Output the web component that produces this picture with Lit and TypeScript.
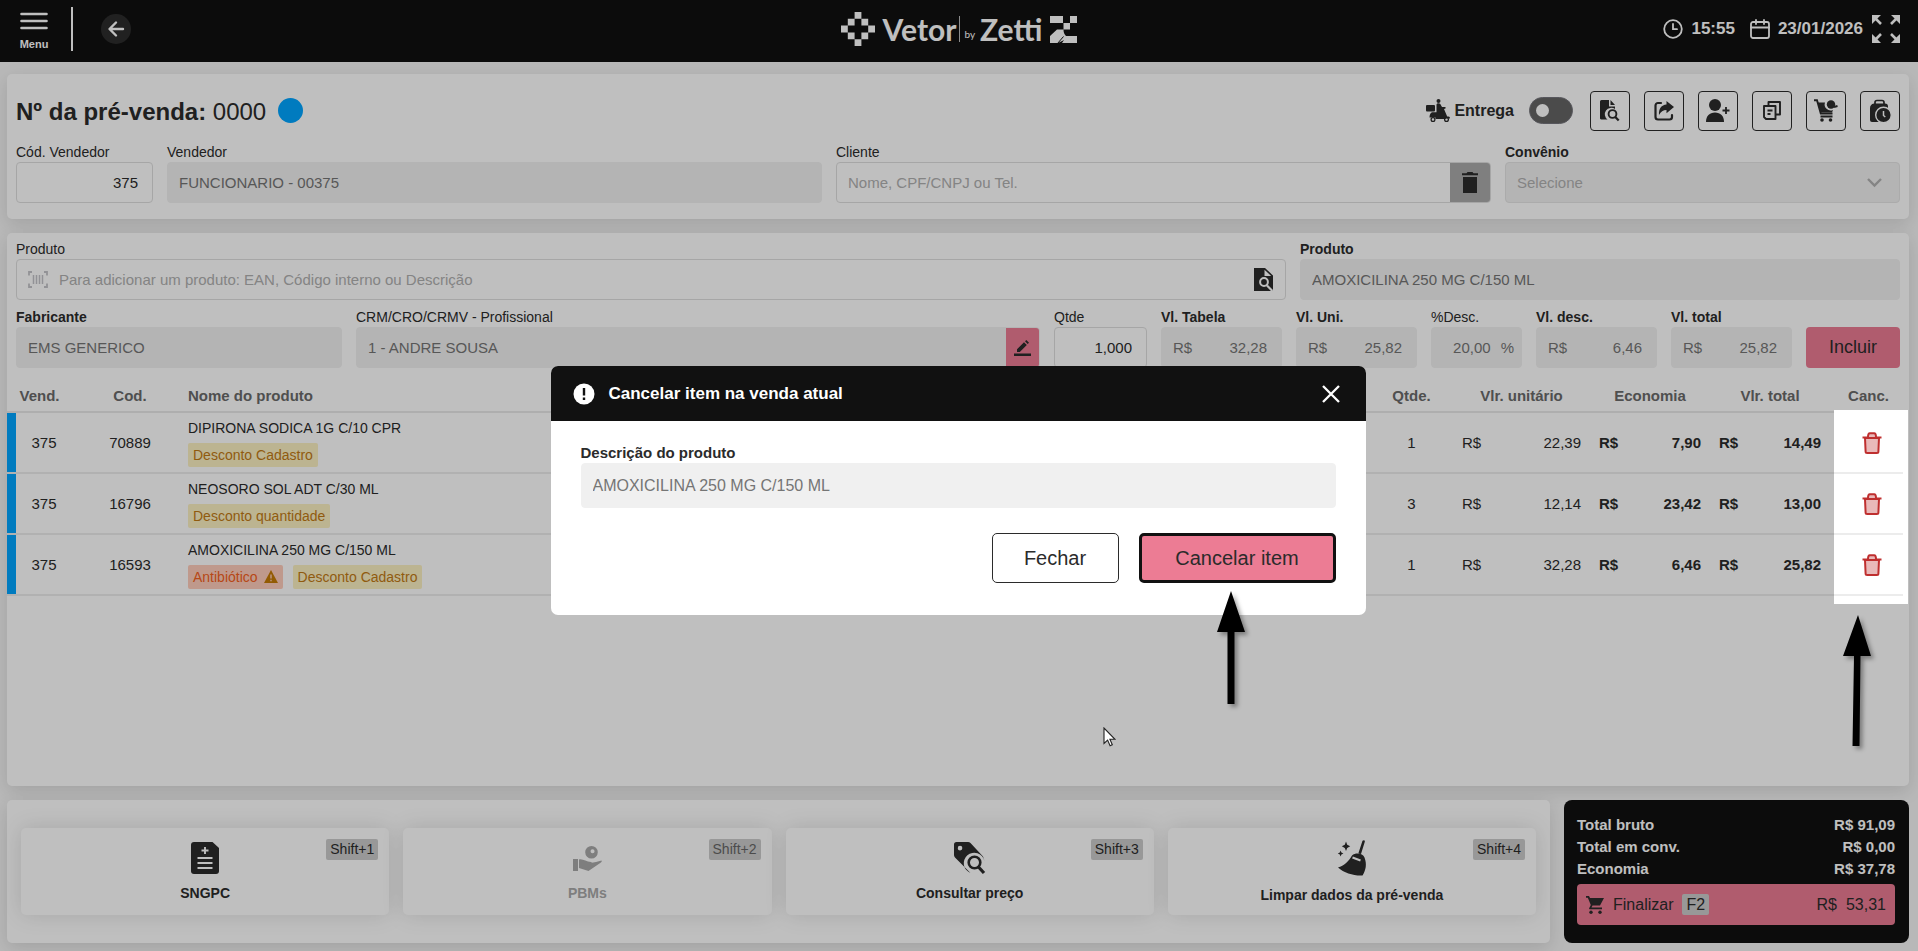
import { LitElement, html, css, svg, nothing, TemplateResult } from "lit";
import { customElement } from "lit/decorators.js";

const icon = (w: number, h: number, box: string, body: TemplateResult) =>
  html`<svg class="icon" width=${w} height=${h} viewBox=${box} aria-hidden="true">${body}</svg>`;

const icons = {
  menu: icon(28, 18, "0 0 28 18", svg`<path d="M1.5 2h25M1.5 9h25M1.5 16h25" stroke="currentColor" stroke-width="2.6" stroke-linecap="round"/>`),
  back: icon(18, 18, "0 0 18 18", svg`<path d="M16 9H3M9 2.5 2.5 9 9 15.5" fill="none" stroke="currentColor" stroke-width="2.4" stroke-linecap="round" stroke-linejoin="round"/>`),
  diamond: icon(34, 34, "0 0 35 35", svg`<path fill="currentColor" d="M14 0h7v7h-7zM7 7h7v7H7zM21 7h7v7h-7zM0 14h7v7H0zM28 14h7v7h-7zM7 21h7v7H7zM21 21h7v7h-7zM14 28h7v7h-7z"/>`),
  zmark: icon(27, 27, "0 0 27 27", svg`<path fill="currentColor" d="M0 0h13v7H0zM20 0h7v7h-7zM13.500 7H20v6.500h-6.500zM7 13.500h6.500c0 2.500.5 4.500 2.500 6.500h11v7H12l2-3-6 3H0v-7z"/><path d="m7.500 27.500 6-7" stroke="#111" stroke-width="1"/>`),
  clock: icon(20, 20, "0 0 20 20", svg`<g fill="none" stroke="currentColor" stroke-width="1.8" stroke-linecap="round"><circle cx="10" cy="10" r="8.800"/><path d="M10 5v5.200h4"/></g>`),
  calendar: icon(20, 20, "0 0 20 20", svg`<g fill="none" stroke="currentColor" stroke-width="1.8" stroke-linecap="round" stroke-linejoin="round"><rect x="1" y="3" width="18" height="16" rx="2"/><path d="M1 8.500h18M6 1v4M14 1v4"/></g>`),
  expand: icon(28, 28, "0 0 28 28", svg`<g fill="currentColor" stroke="currentColor"><path stroke="none" d="M0 0h9L6.400 2.600 0 9zM28 0v9l-6.400-6.400L19 0zM0 28v-9l2.600 2.600L9 28zM28 28h-9l6.400-6.400L28 19z"/><path stroke-width="2.600" d="m2 2 7 7M26 2l-7 7M2 26l7-7M26 26l-7-7"/></g>`),
  moto: icon(24, 23, "0 0 24 23", svg`<g fill="currentColor"><rect x="0" y="6" width="9" height="6.500" rx="1"/><circle cx="12.500" cy="2" r="2"/><path d="M10.500 5.500c.5-1.500 3-1.700 3.800-.4l1.700 2.900h3.500v1.600l-1.500.4 3.200 7.500h1.300c1 0 1.500.8 1.500 2l-3-.2-2 .7H9.500v-1.500H3.500c0-2.500.8-4.500 2.500-5.200h4.500z"/></g><circle cx="7" cy="20.500" r="1.900" fill="none" stroke="currentColor" stroke-width="1.300"/><circle cx="20.500" cy="20.500" r="1.900" fill="none" stroke="currentColor" stroke-width="1.300"/>`),
  docSearch: icon(20, 22, "0 0 20 22", svg`<path fill="currentColor" d="M1.500 0H9v6.500h6V9a6 6 0 0 0-7.500 10.500H1.500A1.500 1.500 0 0 1 0 18.500v-17A1.500 1.500 0 0 1 1.500 0zM10.500 0 15 5h-4.500z"/><circle cx="12.500" cy="14" r="3.900" fill="none" stroke="currentColor" stroke-width="1.900"/><path d="m15.300 17 3.400 3.600" stroke="currentColor" stroke-width="2.200"/>`),
  share: icon(20, 20, "0 0 20 20", svg`<path d="M7 2H4a2.500 2.500 0 0 0-2.500 2.500V16A2.500 2.500 0 0 0 4 18.500h11.500A2.500 2.500 0 0 0 18 16v-2" fill="none" stroke="currentColor" stroke-width="2.200" stroke-linecap="round"/><path fill="currentColor" d="M12.500 0 20 6l-7.500 6.200V9C9 9 7 10.500 5 14 4.500 8 7.500 3.800 12.500 3.500z"/>`),
  userPlus: icon(24, 23, "0 0 24 23", svg`<g fill="currentColor"><circle cx="9" cy="6" r="6"/><path d="M0 23c0-6 3.500-9.500 9-9.500s9 3.500 9 9.500z"/></g><path d="M20 8v7M16.500 11.500h7" stroke="currentColor" stroke-width="1.800"/>`),
  copy: icon(18, 19, "0 0 18 19", svg`<g fill="none" stroke="currentColor" stroke-width="1.900" stroke-linejoin="round"><path d="M5.500 4V1H17v12.500h-4M1 5h11.500v13H3l-2-2z"/><path d="M4.500 9.500h5M4.500 13h3"/></g>`),
  cartUser: icon(24, 23, "0 0 24 23", svg`<path d="M0 1.200h3l3.800 13.300h11.700M6.500 17.500h12" fill="none" stroke="currentColor" stroke-width="1.900"/><path fill="currentColor" d="M3.500 3.500h7.500a6 6 0 0 0 8 7.500l-1 2.500H6.500z"/><circle cx="17" cy="5.500" r="4.200" fill="currentColor"/><path d="m20 8 3.500-1" stroke="currentColor" stroke-width="2"/><circle cx="8" cy="21" r="1.800" fill="currentColor"/><circle cx="16.500" cy="21" r="1.800" fill="currentColor"/>`),
  bagClock: icon(21, 24, "0 0 21 24", svg`<path d="M5 6V3.500a2 2 0 0 1 2-2h5a2 2 0 0 1 2 2V6" fill="none" stroke="currentColor" stroke-width="1.700"/><path fill="currentColor" d="M4 4.500h11a3 3 0 0 1 3 3v6L8 23H2a2 2 0 0 1-2-2V9.500a5 5 0 0 1 4-5z"/><circle cx="13.500" cy="16" r="7.800" fill="currentColor" stroke="#fff" stroke-width="1.400"/><path d="M13.500 12v4.500l1.800 1.500" fill="none" stroke="#fff" stroke-width="1.500"/>`),
  trash: icon(16, 21, "0 0 16 21", svg`<path fill="currentColor" d="M0 1.200h4.500L5.500 0h5l1 1.200H16v2H0zM1 5h14v16H1z"/>`),
  trashRed: icon(20, 22, "0 0 20 22", svg`<g fill="none" stroke="#bf2f2f" stroke-width="2"><path d="M3 6h14l-.6 13.500a1.500 1.500 0 0 1-1.500 1.500H5.100a1.500 1.500 0 0 1-1.500-1.500z" fill="#e9b9b9"/><path d="M0.500 5.500h19"/><path d="M6 5c0-3 .5-3.800 1.800-3.800h4.400C13.500 1.200 14 2 14 5" fill="#e9b9b9"/></g>`),
  barcode: icon(20, 17, "0 0 20 17", svg`<g fill="none" stroke="#c3c3c8" stroke-width="1.800"><path d="M4 1H1v3.500M16 1h3v3.500M4 16H1v-3.500M16 16h3v-3.500"/><path d="M5.500 4v9M8.500 4v9M11.500 4v9M14.500 4v9" stroke-width="1.500"/></g>`),
  findPage: icon(19, 23, "0 0 19 23", svg`<path fill="currentColor" d="M0 0h11l8 7.500V23H0z"/><path fill="#fff" d="M10.500 1.800V8h6.700z"/><circle cx="10" cy="14" r="3.900" fill="none" stroke="#fff" stroke-width="2"/><path d="m13 17.500 5.500 5.500" stroke="#fff" stroke-width="2.200"/>`),
  pencil: icon(17, 16, "0 0 17 16", svg`<path fill="currentColor" d="M0 13.500h17V16H0zM3 12V9.200l7-7L12.800 5l-7 7zM11 1.300 12.300 0 15 2.700 13.700 4z"/>`),
  warn: icon(14, 13, "0 0 14 13", svg`<path fill="#c47a05" d="M7 0l7 13H0z"/><path d="M7 4.500v4M7 9.800v1.500" stroke="#ffcdbb" stroke-width="1.400"/>`),
  alert: icon(22, 22, "0 0 22 22", svg`<circle cx="11" cy="11" r="10.500" fill="#fff"/><path d="M11 5v7.500M11 14.500v2.500" stroke="#111" stroke-width="2.400"/>`),
  close: icon(18, 18, "0 0 18 18", svg`<path d="m1 1 16 16M17 1 1 17" stroke="currentColor" stroke-width="2.300"/>`),
  sngpc: icon(28, 32, "0 0 28 32", svg`<path fill="currentColor" d="M3 0h18.500L28 6v23a3 3 0 0 1-3 3H3a3 3 0 0 1-3-3V3a3 3 0 0 1 3-3z"/><path d="M14 5v7M10.500 8.500h7M6.500 16h15M6.500 21h15M6.500 26h15" stroke="#fff" stroke-width="1.900"/>`),
  pbm: icon(29, 32, "0 -4 29 32", svg`<g fill="currentColor"><rect x="0" y="13" width="5" height="12"/><path d="M6 13.500c4-1 7 2.500 12 2.500 1 0 1 1.500 0 1.800h-5l10-1.800 5.500-1.500c1 1-1 2.500-2 3L15.500 25 6 22z"/><path fill-rule="evenodd" d="M18.500 0a6.300 6.300 0 1 1 0 12.600 6.300 6.300 0 0 1 0-12.600zm1 3.300a2 2 0 1 0 .1 4 2 2 0 0 0-.1-4z"/></g>`),
  price: icon(31, 32, "0 0 31 32", svg`<path fill="currentColor" fill-rule="evenodd" d="M2.500 0H14c1 0 1.800.4 2.500 1L29 14.500l1.500 4.500A10.500 10.500 0 1 0 16.500 31L1 15.500C.3 14.800 0 14 0 13V2.500A2.500 2.500 0 0 1 2.500 0zM6 3.800a2.300 2.300 0 1 0 .1 4.600A2.300 2.300 0 0 0 6 3.800z"/><circle cx="20.500" cy="20.500" r="5.800" fill="none" stroke="currentColor" stroke-width="2.600"/><path d="m24.500 25 5.500 6" stroke="currentColor" stroke-width="3.200"/>`),
  broom: icon(28, 36, "0 0 28 36", svg`<g fill="currentColor"><path d="M24.500.8c1-1.200 2.800-.5 2.300 1L23 14l-2.600-.8zM14 15.500c4-3.500 11-2 12.500 2C29 24 28 30 24.500 35.500 16 36 6 33 0 27.500 6 26 11 21 14 15.500z"/><path d="m8 1.500 1.200 3.200 3 1.600-3 1.600L8 11 6.800 7.900l-3-1.600 3-1.600zM2.600 10.500l.8 2 2 1-2 1-.8 2-.8-2-2-1 2-1z"/></g><path d="m14.500 17.500 8 3" stroke="#fff" stroke-width="2"/>`),
  cart: icon(18, 18, "0 0 18 18", svg`<path fill="currentColor" d="M0 0h3l1 2h14l-4 7.500H6.500L5.500 11.500H16v1.800H3.500L3 12.500l1.800-3.400L1.800 1.800H0z"/><circle cx="5" cy="16.200" r="1.700" fill="currentColor"/><circle cx="14" cy="16.200" r="1.700" fill="currentColor"/>`),
};

interface Row {
  cod: string;
  name: string;
  antibiotic?: boolean;
  tag: string;
  qty: string;
  unit: string;
  saved: string;
  total: string;
}

const rows: Row[] = [
  { cod: "70889", name: "DIPIRONA SODICA 1G C/10 CPR", tag: "Desconto Cadastro", qty: "1", unit: "22,39", saved: "7,90", total: "14,49" },
  { cod: "16796", name: "NEOSORO SOL ADT C/30 ML", tag: "Desconto quantidade", qty: "3", unit: "12,14", saved: "23,42", total: "13,00" },
  { cod: "16593", name: "AMOXICILINA 250 MG C/150 ML", antibiotic: true, tag: "Desconto Cadastro", qty: "1", unit: "32,28", saved: "6,46", total: "25,82" },
];

const actions = [
  { label: "SNGPC", key: "Shift+1", icon: icons.sngpc },
  { label: "PBMs", key: "Shift+2", icon: icons.pbm, disabled: true },
  { label: "Consultar preço", key: "Shift+3", icon: icons.price },
  { label: "Limpar dados da pré-venda", key: "Shift+4", icon: icons.broom },
];

const tools = [
  { label: "Buscar pré-venda", icon: icons.docSearch },
  { label: "Compartilhar", icon: icons.share },
  { label: "Novo cliente", icon: icons.userPlus },
  { label: "Copiar", icon: icons.copy },
  { label: "Carrinho do cliente", icon: icons.cartUser },
  { label: "Histórico de compras", icon: icons.bagClock },
];

@customElement("app-root")
export class AppRoot extends LitElement {
  static styles = css`
    :host {
      display: flex;
      flex-direction: column;
      min-height: 100vh;
      box-sizing: border-box;
      position: relative;
      background: #f6f6f6;
      color: #2b2b2b;
      font-family: "Liberation Sans", Arial, sans-serif;
      font-size: 15px;
    }
    *, *::before, *::after { box-sizing: border-box; }
    button, input, select { font: inherit; color: inherit; margin: 0; }
    button { padding: 0; border: 0; background: none; }
    .icon { display: block; flex: none; overflow: visible; }

    .top {
      display: grid;
      grid-template-columns: 1fr auto 1fr;
      align-items: center;
      height: 62px;
      padding: 0 18px 4px;
      background: #111;
      color: #fff;
    }
    .top-left { display: flex; align-items: center; }
    .menu {
      display: flex;
      flex-direction: column;
      align-items: center;
      gap: 8px;
      width: 32px;
      padding-top: 4px;
      font-size: 11px;
      line-height: 12px;
      font-weight: 700;
    }
    .rule { width: 2px; height: 44px; margin: 0 28px 0 21px; background: #fff; }
    .back {
      display: grid;
      place-items: center;
      width: 30px;
      height: 30px;
      border-radius: 50%;
      background: #2d2d2d;
    }
    .logo { display: flex; align-items: center; font-family: Lato, sans-serif; font-size: 30px; line-height: 34px; font-weight: 700; }
    .logo-name { margin-left: 8px; }
    .logo-by {
      height: 26px;
      margin-left: 3px;
      padding: 12px 5px 0 4px;
      border-left: 1px solid #bbb;
      font-size: 10px;
      line-height: 12px;
      font-weight: 400;
    }
    .logo-mark { margin-left: 8px; }
    .top-right { display: flex; justify-content: flex-end; align-items: center; font-size: 17px; font-weight: 700; gap: 9px; }
    .top-right .date { margin-left: 6px; }
    .pair { display: flex; align-items: center; gap: 8px; }

    .main { flex: 1; display: flex; flex-direction: column; gap: 14px; padding: 12px 9px 8px 7px; }
    .card { background: #fff; border-radius: 5px; box-shadow: 0 5px 18px rgba(0, 0, 0, 0.12); }
    .sale { padding: 16px 9px; }
    .sale-head { display: flex; align-items: center; height: 41px; }
    h1 { margin: 0; padding-top: 2px; font-size: 24px; line-height: 32px; font-weight: 700; }
    h1 span { font-weight: 400; }
    .dot { width: 25px; height: 25px; margin-left: 12px; border-radius: 50%; background: #00a4ff; }
    .tools { display: flex; align-items: center; gap: 14px; margin-left: auto; }
    .delivery { display: flex; align-items: center; gap: 4px; font-size: 16px; font-weight: 700; }
    .switch {
      appearance: none;
      width: 44px;
      height: 27px;
      margin: 0 0 0 11px;
      padding: 6px;
      border-radius: 14px;
      background: #646464;
      border: 1px solid #75757c;
    }
    .switch::before { content: ""; display: block; width: 13px; height: 13px; border-radius: 50%; background: #fff; }
    .tool {
      display: grid;
      place-items: center;
      width: 40px;
      height: 40px;
      border: 1px solid #2b2b2b;
      border-radius: 4px;
    }
    .delivery + .tool { margin-left: 3px; }

    .grid { display: grid; gap: 14px; }
    .grid-sale { grid-template-columns: 137fr 655fr 655fr 395fr; margin-top: 12px; }
    .grid-product { grid-template-columns: 1270fr 600fr; }
    .grid-values { grid-template-columns: 326fr 684fr 93fr 121fr 121fr 91fr 121fr 121fr 94fr; margin-top: 8px; align-items: end; }
    .field { min-width: 0; }
    .field label { display: block; font-size: 14px; line-height: 19px; white-space: nowrap; }
    .field label.strong { font-weight: 700; }
    .box {
      display: flex;
      align-items: center;
      height: 41px;
      border: 1px solid #dedede;
      border-radius: 4px;
      background: #fff;
      overflow: hidden;
    }
    .box.ro { background: #f0f0f0; border-color: #f0f0f0; color: #757575; }
    .box input, .box select {
      flex: 1;
      min-width: 0;
      width: 100%;
      height: 100%;
      padding: 0 11px;
      border: 0;
      outline: 0;
      background: transparent;
      opacity: 1;
    }
    .box input::placeholder { color: #b0b0b0; opacity: 1; }
    .box .num { text-align: right; padding: 0 14px; }
    .unit { padding-left: 11px; }
    .unit + .num { padding-left: 0; }
    .box .pct { padding-right: 10px; }
    .unit-end { padding-right: 7px; }
    .box select { appearance: none; color: #b0b0b0; }
    .box.select { border-color: #e4e4e4; }
    .chev { margin-right: 17px; }
    .clear { align-self: stretch; display: grid; place-items: center; width: 40px; background: #aaa; }
    .edit { align-self: stretch; display: grid; place-items: center; width: 33px; background: #eb7b93; color: #2b2b2b; }
    .scan { padding-left: 11px; }
    .box .find { margin-right: 12px; color: #2b2b2b; }
    .include { height: 41px; border-radius: 4px; background: #eb7b93; font-size: 18px; }

    .products { flex: 1; padding-top: 7px; }
    .form { padding: 0 9px; }
    .table-wrap { padding-right: 6px; margin-top: 13px; }
    table { width: 100%; border-collapse: separate; border-spacing: 0; table-layout: fixed; }
    th { height: 32px; padding: 0; font-size: 15px; line-height: 20px; color: #6a6a6a; text-align: center; border-bottom: 2px solid #e9e9e9; }
    td { position: relative; height: 61px; padding: 0; text-align: center; border-bottom: 2px solid #ececec; }
    .c-vend { width: 65px; }
    .c-cod { width: 116px; }
    .c-qty { width: 83px; }
    .c-unit { width: 137px; }
    .c-money { width: 120px; }
    .c-total { width: 124px; }
    .c-canc { width: 69px; }
    th.name, td.name { text-align: left; }
    td.vend {
      padding-left: 9px;
      background: linear-gradient(#00a4ff, #00a4ff) no-repeat 0 0 / 9px 100%;
      background-clip: padding-box;
    }
    td.name { font-size: 14px; line-height: 18px; }
    th.total, td.total { padding-right: 4px; }
    .tags { display: flex; gap: 10px; margin-top: 6px; }
    .tag { display: flex; align-items: center; gap: 6px; height: 24px; padding: 0 5px; border-radius: 2px; background: #fbf0c2; color: #c17a14; }
    .tag.anti { background: #ffcdbb; color: #f45f20; }
    .money { display: flex; justify-content: space-between; padding: 0 9px; }
    .bold { font-weight: 700; }
    td.canc { z-index: 12; padding-left: 6px; }
    td.canc button { display: block; margin: 0 auto; }

    .spot-anchor { position: relative; }
    .spot { position: absolute; z-index: 11; right: 1px; top: 29px; bottom: -8px; width: 74px; background: #fff; }
    .spot-arrow { position: absolute; top: 203px; left: 6px; }

    .bottom { display: grid; grid-template-columns: 1543fr 345fr; gap: 14px; }
    .actions { display: grid; grid-template-columns: repeat(4, 1fr); gap: 14px; padding: 28px 14px 27px; }
    .action {
      position: relative;
      display: flex;
      flex-direction: column;
      align-items: center;
      justify-content: center;
      gap: 10px;
      height: 87px;
      border-radius: 5px;
      background: #fff;
      box-shadow: 0 0 22px rgba(0, 0, 0, 0.13);
      font-size: 14px;
      line-height: 18px;
      font-weight: 700;
    }
    .action:disabled { color: #a9a9a9; }
    kbd { font: inherit; font-weight: 400; padding: 0 4px; border-radius: 2px; background: #cbcbcb; color: #2b2b2b; line-height: 21px; }
    .action kbd { position: absolute; top: 11px; right: 11px; }
    .action:disabled kbd { color: #666; }
    .totals { padding: 14px 14px 18px 13px; border-radius: 8px; background: #111; color: #fff; font-weight: 700; }
    .totals dl { margin: 0 0 4px; }
    .totals dl div { display: flex; justify-content: space-between; line-height: 22px; }
    .totals dd { margin: 0; }
    .finish {
      display: flex;
      align-items: center;
      width: 100%;
      height: 41px;
      padding: 0 9px;
      border-radius: 4px;
      background: #eb7b93;
      color: #2b2b2b;
      font-size: 16px;
      font-weight: 400;
    }
    .finish-label { margin: 0 9px; }
    .finish-cur { margin-left: auto; }
    .finish-val { margin-left: 9px; }

    .backdrop {
      position: absolute;
      inset: 0;
      z-index: 10;
      display: flex;
      align-items: center;
      justify-content: center;
      padding: 30px 2px 0 0;
      background: rgba(0, 0, 0, 0.25);
    }
    .modal { position: relative; width: 815px; max-width: 94%; border-radius: 7px; background: #fff; }
    .modal-head { display: flex; align-items: center; height: 55px; padding: 0 26px 0 22px; border-radius: 7px 7px 0 0; background: #111; color: #fff; }
    h2 { flex: 1; margin: 0 0 0 14px; font-size: 17px; line-height: 24px; }
    .modal-body { padding: 21px 30px 32px; }
    .modal .field label { font-size: 15px; line-height: 21px; }
    .modal .box { height: 45px; font-size: 16px; }
    .modal-actions { display: flex; justify-content: flex-end; gap: 20px; margin-top: 25px; font-size: 20px; }
    .modal-actions button { height: 50px; border-radius: 5px; }
    .shut { width: 127px; border: 1px solid #2b2b2b; }
    .confirm { width: 197px; border: 3px solid #111; background: #ec7c94; }
    .modal-arrow { position: absolute; top: 223px; right: 117px; }
    .pointer { position: absolute; top: 361px; left: 552px; }
    .shade { filter: drop-shadow(3px 3px 2px rgba(0, 0, 0, 0.35)); }
  `;

  private money(id: string, label: string, value: string) {
    return html`<div class="field">
      <label class="strong" for=${id}>${label}</label>
      <div class="box ro"><span class="unit">R$</span><input class="num" id=${id} readonly .value=${value} /></div>
    </div>`;
  }

  private plain(id: string, label: string, value: string, strong = false) {
    return html`<div class="field">
      <label class=${strong ? "strong" : ""} for=${id}>${label}</label>
      <div class="box ro"><input id=${id} readonly .value=${value} /></div>
    </div>`;
  }

  private header() {
    return html`<header class="top">
      <div class="top-left">
        <button class="menu">${icons.menu}<span>Menu</span></button>
        <span class="rule"></span>
        <button class="back" aria-label="Voltar">${icons.back}</button>
      </div>
      <div class="logo">
        ${icons.diamond}<span class="logo-name">Vetor</span><span class="logo-by">by</span><span>Zetti</span>
        <span class="logo-mark">${icons.zmark}</span>
      </div>
      <div class="top-right">
        <span class="pair">${icons.clock}<time>15:55</time></span>
        <span class="pair date">${icons.calendar}<time>23/01/2026</time></span>
        <button aria-label="Tela cheia">${icons.expand}</button>
      </div>
    </header>`;
  }

  private sale() {
    return html`<section class="card sale">
      <div class="sale-head">
        <h1>Nº da pré-venda: <span>0000</span></h1>
        <span class="dot"></span>
        <div class="tools">
          <label class="delivery">${icons.moto}<span>Entrega</span><input class="switch" type="checkbox" role="switch" /></label>
          ${tools.map((t) => html`<button class="tool" aria-label=${t.label}>${t.icon}</button>`)}
        </div>
      </div>
      <div class="grid grid-sale">
        <div class="field">
          <label for="cod">Cód. Vendedor</label>
          <div class="box"><input class="num" id="cod" .value=${"375"} /></div>
        </div>
        ${this.plain("vendedor", "Vendedor", "FUNCIONARIO - 00375")}
        <div class="field">
          <label for="cliente">Cliente</label>
          <div class="box">
            <input id="cliente" placeholder="Nome, CPF/CNPJ ou Tel." />
            <button class="clear" aria-label="Limpar cliente">${icons.trash}</button>
          </div>
        </div>
        <div class="field">
          <label class="strong" for="convenio">Convênio</label>
          <div class="box ro select">
            <select id="convenio" disabled><option>Selecione</option></select>
            <span class="chev">${icon(15, 9, "0 0 15 9", svg`<path d="m1 1 6.500 6.500L14 1" fill="none" stroke="#b0b0b0" stroke-width="2.400"/>`)}</span>
          </div>
        </div>
      </div>
    </section>`;
  }

  private products() {
    return html`<section class="card products">
      <div class="form">
        <div class="grid grid-product">
          <div class="field">
            <label for="busca">Produto</label>
            <div class="box">
              <span class="scan">${icons.barcode}</span>
              <input id="busca" placeholder="Para adicionar um produto: EAN, Código interno ou Descrição" />
              <button class="find" aria-label="Buscar produto">${icons.findPage}</button>
            </div>
          </div>
          ${this.plain("produto", "Produto", "AMOXICILINA 250 MG C/150 ML", true)}
        </div>
        <div class="grid grid-values">
          ${this.plain("fabricante", "Fabricante", "EMS GENERICO", true)}
          <div class="field">
            <label for="prof">CRM/CRO/CRMV - Profissional</label>
            <div class="box ro">
              <input id="prof" readonly .value=${"1 - ANDRE SOUSA"} />
              <button class="edit" aria-label="Editar profissional">${icons.pencil}</button>
            </div>
          </div>
          <div class="field">
            <label for="qtde">Qtde</label>
            <div class="box"><input class="num" id="qtde" .value=${"1,000"} /></div>
          </div>
          ${this.money("tabela", "Vl. Tabela", "32,28")}
          ${this.money("uni", "Vl. Uni.", "25,82")}
          <div class="field">
            <label for="pdesc">%Desc.</label>
            <div class="box ro"><input class="num pct" id="pdesc" readonly .value=${"20,00"} /><span class="unit-end">%</span></div>
          </div>
          ${this.money("vdesc", "Vl. desc.", "6,46")}
          ${this.money("vtotal", "Vl. total", "25,82")}
          <button class="include">Incluir</button>
        </div>
      </div>
      <div class="spot-anchor">
        <div class="table-wrap">
          <table>
            <colgroup>
              <col class="c-vend" /><col class="c-cod" /><col /><col class="c-qty" /><col class="c-unit" />
              <col class="c-money" /><col class="c-total" /><col class="c-canc" />
            </colgroup>
            <thead>
              <tr>
                <th>Vend.</th><th>Cod.</th><th class="name">Nome do produto</th><th>Qtde.</th><th>Vlr. unitário</th>
                <th>Economia</th><th class="total">Vlr. total</th><th>Canc.</th>
              </tr>
            </thead>
            <tbody>
              ${rows.map((r) => html`<tr>
                <td class="vend">375</td>
                <td>${r.cod}</td>
                <td class="name">
                  ${r.name}
                  <div class="tags">
                    ${r.antibiotic ? html`<span class="tag anti">Antibiótico ${icons.warn}</span>` : nothing}
                    <span class="tag">${r.tag}</span>
                  </div>
                </td>
                <td>${r.qty}</td>
                <td><div class="money"><span>R$</span><span>${r.unit}</span></div></td>
                <td class="bold"><div class="money"><span>R$</span><span>${r.saved}</span></div></td>
                <td class="bold total"><div class="money"><span>R$</span><span>${r.total}</span></div></td>
                <td class="canc"><button aria-label="Cancelar ${r.name}">${icons.trashRed}</button></td>
              </tr>`)}
            </tbody>
          </table>
        </div>
        <div class="spot">
          <svg class="spot-arrow shade" width="36" height="136" viewBox="0 0 36 136" aria-hidden="true"><path d="M18 2 31 43H20.500L19.500 133H12.500L14 43H3z"/></svg>
        </div>
      </div>
    </section>`;
  }

  private footer() {
    return html`<div class="bottom">
      <section class="card actions">
        ${actions.map((a) => html`<button class="action" ?disabled=${!!a.disabled}>${a.icon}<span>${a.label}</span><kbd>${a.key}</kbd></button>`)}
      </section>
      <section class="totals">
        <dl>
          <div><dt>Total bruto</dt><dd>R$ 91,09</dd></div>
          <div><dt>Total em conv.</dt><dd>R$ 0,00</dd></div>
          <div><dt>Economia</dt><dd>R$ 37,78</dd></div>
        </dl>
        <button class="finish">
          ${icons.cart}<span class="finish-label">Finalizar</span><kbd>F2</kbd>
          <span class="finish-cur">R$</span><span class="finish-val">53,31</span>
        </button>
      </section>
    </div>`;
  }

  private dialog() {
    return html`<div class="backdrop">
      <div class="modal" role="dialog" aria-modal="true" aria-labelledby="dlg">
        <div class="modal-head">${icons.alert}<h2 id="dlg">Cancelar item na venda atual</h2><button aria-label="Fechar janela">${icons.close}</button></div>
        <div class="modal-body">
          ${this.plain("descricao", "Descrição do produto", "AMOXICILINA 250 MG C/150 ML", true)}
          <div class="modal-actions"><button class="shut">Fechar</button><button class="confirm">Cancelar item</button></div>
        </div>
        <svg class="modal-arrow shade" width="36" height="118" viewBox="0 0 36 118" aria-hidden="true"><path d="M18 2 32 43H21.500V115H14.500V43H4z"/></svg>
        <svg class="pointer" width="13" height="20" viewBox="0 0 13 20" aria-hidden="true"><path d="M1 1v15.500l3.600-3.400 2.500 5.700 2.200-1-2.400-5.500H12z" fill="#fff" stroke="#222" stroke-width="1.100"/></svg>
      </div>
    </div>`;
  }

  render() {
    return html`${this.header()}
      <main class="main">${this.sale()}${this.products()}${this.footer()}</main>
      ${this.dialog()}`;
  }
}
